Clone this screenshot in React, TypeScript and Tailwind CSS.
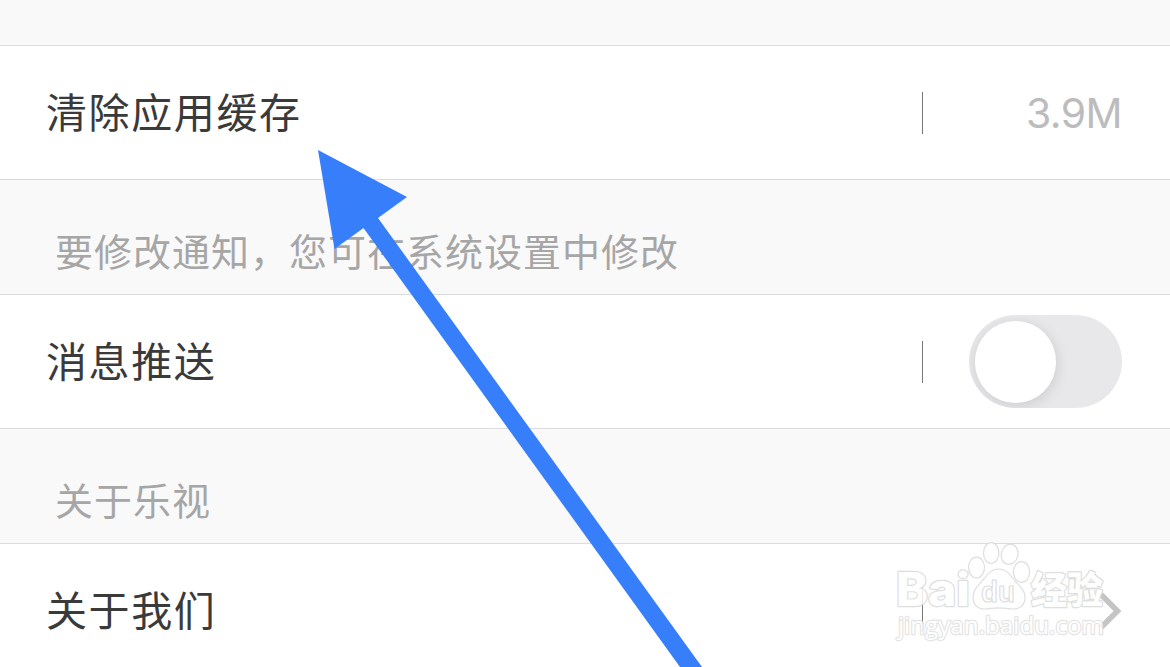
import React from 'react';

interface RowProps {
  label: string;
  children?: React.ReactNode;
}

function Row({ label, children }: RowProps) {
  return (
    <div className="flex h-[135px] flex-none items-center border-y border-[#dcdcdc] bg-white pl-[46px] pr-12">
      <span className="flex-1 pb-[5px] text-[41px] leading-[60px] tracking-[1.6px] text-[#3a3a3a]">{label}</span>
      <span className="h-[42px] w-px bg-[#777777]" />
      <div className="flex w-[199px] items-center justify-end">{children}</div>
    </div>
  );
}

function SectionTitle({ children }: { children: React.ReactNode }) {
  return (
    <div className="flex h-[114px] flex-none items-end bg-[#f9f9fa] pb-4 pl-[55px]">
      <span className="text-[38px] leading-[56px] tracking-[1px] text-[#a6a6a6]">{children}</span>
    </div>
  );
}

function Toggle() {
  return (
    <button
      type="button"
      role="switch"
      aria-checked={false}
      className="flex h-[93px] w-[153px] items-center overflow-hidden rounded-full bg-[#e8e8ea] pl-[6px]"
    >
      <span className="h-[82px] w-[81px] rounded-full bg-white shadow-[1px_3px_14px_rgba(0,0,0,0.12)]" />
    </button>
  );
}

function Watermark() {
  return (
    <svg
      className="absolute left-[890px] top-[536px] opacity-85"
      width="230"
      height="110"
      viewBox="0 0 230 110"
      fill="#ffffff"
      stroke="#d9d9d9"
      strokeWidth="1.2"
      strokeLinejoin="round"
    >
      {/* Wordmark */}
      <text
        x="6"
        y="70"
        fontFamily="Inter, sans-serif"
        fontWeight="800"
        fontSize="46"
        textLength="74"
        lengthAdjust="spacingAndGlyphs"
        strokeWidth="2.4"
        paintOrder="stroke"
      >
        Bai
      </text>

      {/* Paw */}
      <ellipse cx="86.500" cy="31.500" rx="8" ry="10.300" />
      <ellipse cx="101.200" cy="17" rx="7.700" ry="10.500" />
      <ellipse cx="119.600" cy="18.300" rx="8.300" ry="10.200" transform="rotate(12 119.600 18.300)" />
      <ellipse cx="131.500" cy="36" rx="8.100" ry="10.300" />
      <path d="M108.500 33c-6 0-10 3.500-13.500 8.500-4 6-12 10.500-12 20 0 7.500 5 11.500 11 11.500 5 0 9-1.200 14.500-1.200S118 73 123.500 73c7 0 11.500-4.500 11.500-11.500 0-9.500-9-14-12.800-20C119 36.500 115 33 108.500 33Z" />
      <text
        x="91"
        y="65.500"
        fontFamily="'Liberation Sans', sans-serif"
        fontWeight="700"
        fontSize="29"
        textLength="34"
        lengthAdjust="spacingAndGlyphs"
      >
        du
      </text>

      <text
        x="141"
        y="67.500"
        fontFamily="'Noto Sans CJK SC', sans-serif"
        fontWeight="900"
        fontSize="37"
        textLength="72"
        lengthAdjust="spacingAndGlyphs"
        strokeWidth="2.4"
        paintOrder="stroke"
      >
        经验
      </text>
      <text
        x="8"
        y="98"
        fontFamily="'Open Sans', sans-serif"
        fontSize="24"
        textLength="206"
        lengthAdjust="spacingAndGlyphs"
        strokeWidth="2.4"
        paintOrder="stroke"
        stroke="#e0e0e0"
      >
        jingyan.baidu.com
      </text>
    </svg>
  );
}

export default function App() {
  return (
    <div
      lang="zh-CN"
      className="relative flex h-[667px] w-[1170px] flex-col overflow-hidden bg-[#f9f9fa] font-['Noto_Sans_CJK_SC',sans-serif]"
    >
      <div className="h-[45px] flex-none" />

      <Row label="清除应用缓存">
        <span className="pt-[3px] font-[Inter,sans-serif] text-[41px] tracking-[-0.6px] text-[#bcbcbc]">3.9M</span>
      </Row>

      <SectionTitle>要修改通知，您可在系统设置中修改</SectionTitle>

      <Row label="消息推送">
        <Toggle />
      </Row>

      <SectionTitle>关于乐视</SectionTitle>

      <Row label="关于我们">
        <svg width="24" height="38" viewBox="0 0 24 38" fill="none" stroke="#c4c4c4" strokeWidth="5.500">
          <path d="M3 2.500 19.500 19 3 35.500" />
        </svg>
      </Row>

      <Watermark />

      {/* Pointer arrow */}
      <svg className="absolute inset-0" width="1170" height="667" viewBox="0 0 1170 667" fill="#377efb">
        <path d="M318 150 407 197 378 218 702 667H680L363.500 228 334.500 249Z" />
      </svg>
    </div>
  );
}
